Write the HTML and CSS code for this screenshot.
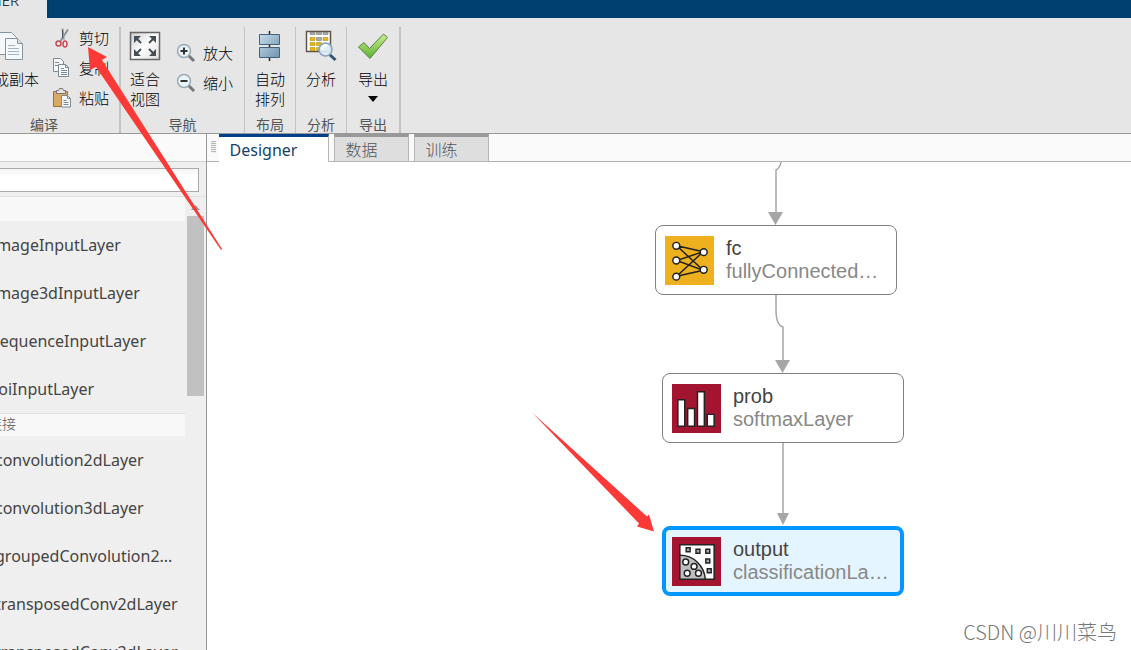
FILE: index.html
```html
<!DOCTYPE html>
<html lang="zh-CN">
<head>
<meta charset="utf-8">
<meta name="viewport" content="width=device-width, initial-scale=1">
<title>Designer</title>
<link rel="stylesheet" href="styles.css">
</head>
<body>
<div class="app">
  <header class="titlebar"><span class="app-tab">DESIGNER</span></header>

  <div class="toolstrip">
    <section class="group group-edit">
      <div class="tools">
        <button class="tool tool-big tool-copy" type="button">
          <svg width="32" height="32" viewBox="0 0 32 32"><g fill="#f4f8fa" stroke="#8795a0"><path d="M5.500 2.500h12l5 5v17h-17z"/><path d="M11.500 8.500h12l5 5v16h-17z"/><path d="M23.500 8.500v5h5" fill="#d5dfe5"/><path d="M14 15.500h7M14 18.500h11M14 21.500h11M14 24.500h11" stroke="#a5b4be"/></g></svg>
          <span>生成副本</span>
        </button>
        <div class="stack">
          <button class="tool" type="button">
            <svg width="20" height="20" viewBox="0 0 20 20" fill="none"><path d="M10.500 0.500l1.200 11M16 1.500L8.500 13" stroke="#8b959b" stroke-width="2"/><path d="M10.500 2v8" stroke="#4e5a62"/><ellipse cx="6.500" cy="15.500" rx="2.500" ry="2.500" stroke="#c94a54" stroke-width="1.500"/><ellipse cx="13" cy="16" rx="2" ry="3" stroke="#c94a54" stroke-width="1.500"/></svg>
            <span>剪切</span>
          </button>
          <button class="tool" type="button">
            <svg width="20" height="20" viewBox="0 0 20 20"><g fill="#f5f7f8" stroke="#7d8a93"><path d="M1.500 0.500h7l3 3v10h-10z"/><path d="M6.500 6.500h7l3 3v9h-10z"/><path d="M13.500 6.500v3h3M9 10.500h3M9 12.500h6M9 14.500h6M9 16.500h6M3 4.500h4M3 7.500h3" fill="none"/></g></svg>
            <span>复制</span>
          </button>
          <button class="tool" type="button">
            <svg width="20" height="20" viewBox="0 0 20 20"><path d="M1.500 3.500h14v15h-14z" fill="#d9aa62" stroke="#9c7132"/><path d="M4.500 5.500v-3h2l1-2h3l1 2h2v3z" fill="#e1e3e4" stroke="#777"/><path d="M9.500 7.500h6l3 3v8.500h-9z" fill="#f5f7f8" stroke="#7d8a93"/><path d="M15.500 7.500v3h3M11.500 12.500h3M11.500 14.500h5M11.500 16.500h5" fill="none" stroke="#7d8a93"/></svg>
            <span>粘贴</span>
          </button>
        </div>
      </div>
      <h2 class="group-name">编译</h2>
    </section>

    <section class="group group-nav">
      <div class="tools">
        <button class="tool tool-big" type="button">
          <svg width="32" height="32" viewBox="0 0 32 32"><defs><linearGradient id="fit" x2="1" y2="1"><stop stop-color="#ccc"/><stop offset=".5" stop-color="#fff"/><stop offset="1" stop-color="#ddd"/></linearGradient></defs><path d="M1.500 2.500h29v27h-29z" fill="url(#fit)" stroke="#666" stroke-width="1.500"/><g fill="#454f55" stroke="#454f55"><path d="M5 6h7l-7 7zM27 6h-7l7 7zM5 26h7l-7-7zM27 26h-7l7-7z" stroke="none"/><path d="M7 8l5 5M25 8l-5 5M7 24l5-5M25 24l-5-5" stroke-width="2"/></g></svg>
          <span>适合<br>视图</span>
        </button>
        <div class="stack stack-zoom">
          <button class="tool" type="button">
            <svg width="20" height="20" viewBox="0 0 20 20"><path d="M12 12l6 6" stroke="#777" stroke-width="3"/><circle cx="8" cy="8" r="6.500" fill="#e9f3fa" stroke="#9eabb4" stroke-width="1.500"/><path d="M4.500 8h7M8 4.500v7" stroke="#333" stroke-width="2"/></svg>
            <span>放大</span>
          </button>
          <button class="tool" type="button">
            <svg width="20" height="20" viewBox="0 0 20 20"><path d="M12 12l6 6" stroke="#777" stroke-width="3"/><circle cx="8" cy="8" r="6.500" fill="#e9f3fa" stroke="#9eabb4" stroke-width="1.500"/><path d="M4.500 8h7" stroke="#333" stroke-width="2"/></svg>
            <span>缩小</span>
          </button>
        </div>
      </div>
      <h2 class="group-name">导航</h2>
    </section>

    <section class="group group-single">
      <div class="tools">
        <button class="tool tool-big" type="button">
          <svg width="32" height="32" viewBox="0 0 32 32"><defs><linearGradient id="bar" x2="1" y2="1"><stop stop-color="#c5dbea"/><stop offset="1" stop-color="#6e93ae"/></linearGradient></defs><path d="M15.500 1v30" stroke="#222" stroke-width="1.500"/><path d="M5.500 4.500h20v10h-20zM5.500 17.500h20v10h-20z" fill="url(#bar)" stroke="#46627a"/></svg>
          <span>自动<br>排列</span>
        </button>
      </div>
      <h2 class="group-name">布局</h2>
    </section>

    <section class="group group-single">
      <div class="tools">
        <button class="tool tool-big" type="button">
          <svg width="32" height="32" viewBox="0 0 32 32"><path d="M1.500 1.500h24v20h-24z" fill="#fff" stroke="#5f5348" stroke-width="1.500"/><path d="M5 2.500h5v2H5zM11.500 2.500h5v2h-5zM18 2.500h5v2h-5zM11.500 7.500h5v3h-5z" fill="#aaa" stroke="#666" stroke-width=".5"/><path d="M5 7.500h5v3H5zM18 7.500h5v3h-5zM5 12.500h5v3H5zM11.500 12.500h5v3h-5zM5 17.500h5v3H5zM11.500 17.500h4v3h-4z" fill="#e8b70d" stroke="#a9850a" stroke-width=".5"/><path d="M24 24l6.500 6" stroke="#31547a" stroke-width="3"/><circle cx="20.500" cy="19.500" r="6.500" fill="#dbeef8" fill-opacity=".9" stroke="#8aa5b8" stroke-width="1.500"/><path d="M17 20a4 4 0 0 1 5-4" fill="none" stroke="#fff" stroke-width="2"/></svg>
          <span>分析</span>
        </button>
      </div>
      <h2 class="group-name">分析</h2>
    </section>

    <section class="group group-export">
      <div class="tools">
        <button class="tool tool-big tool-export" type="button">
          <svg width="32" height="32" viewBox="0 0 32 32"><defs><linearGradient id="ok" x2="0" y2="1"><stop stop-color="#c8f08c"/><stop offset="1" stop-color="#5cb030"/></linearGradient></defs><path d="M1.500 17l5.500-4.500 5.500 6L26.500 4l4 3.500L13 28.500z" fill="url(#ok)" stroke="#5c7d4a" stroke-linejoin="round"/></svg>
          <span>导出</span>
          <svg width="10" height="6" viewBox="0 0 10 6"><path d="M0 0h10L5 6z"/></svg>
        </button>
      </div>
      <h2 class="group-name">导出</h2>
    </section>
  </div>

  <div class="workspace">
    <aside class="library">
      <div class="library-head"></div>
      <div class="search"><input type="text" aria-label="搜索层"></div>
      <div class="library-body">
        <div class="layers">
          <h3 class="section-name"></h3>
          <ul class="layer-list">
            <li>imageInputLayer</li>
            <li>image3dInputLayer</li>
            <li>sequenceInputLayer</li>
            <li>roiInputLayer</li>
          </ul>
          <h3 class="section-name section-line">连接</h3>
          <ul class="layer-list layer-list-conv">
            <li>convolution2dLayer</li>
            <li>convolution3dLayer</li>
            <li>groupedConvolution2...</li>
            <li>transposedConv2dLayer</li>
            <li>transposedConv3dLayer</li>
          </ul>
        </div>
        <div class="scrollbar">
          <svg width="9" height="5" viewBox="0 0 9 5"><path d="M0 5h9L4.500 0z" fill="#999"/></svg>
          <div class="thumb"></div>
        </div>
      </div>
    </aside>

    <main class="document">
      <nav class="tabs">
        <span class="grip"></span>
        <button class="tab tab-active" type="button">Designer</button>
        <button class="tab" type="button">数据</button>
        <button class="tab" type="button">训练</button>
      </nav>
      <div class="canvas">
        <svg class="links" width="720" height="480" viewBox="0 0 720 480">
          <g fill="none" stroke="#a6a6a6" stroke-width="1.500">
            <path d="M574 0Q573 6 569 8V52M569 133V148Q569 163 576 165V200M576 280V352"/>
          </g>
          <path d="M561 50h15l-7.500 13zM568 198h15l-7.500 13zM570 351h12l-6 12z" fill="#a6a6a6"/>
        </svg>
        <div class="node node-fc">
          <svg class="node-icon" width="49" height="49" viewBox="0 0 50 50"><path d="M0 0h50v50H0z" fill="#edb120"/><path d="M12 10l27 6L12 25l27 10L12 41l27-25M12 10l27 25L12 41" fill="none" stroke="#222" stroke-width="1.500"/><g fill="#fff" stroke="#222" stroke-width="1.500"><circle cx="11.500" cy="10" r="3.500"/><circle cx="11.500" cy="25" r="3.500"/><circle cx="11.500" cy="41.500" r="3.500"/><circle cx="39.500" cy="16.500" r="3.500"/><circle cx="39.500" cy="34.500" r="3.500"/></g></svg>
          <div class="node-text"><strong>fc</strong><span>fullyConnected…</span></div>
        </div>
        <div class="node node-prob">
          <svg class="node-icon" width="49" height="49" viewBox="0 0 50 50"><path d="M0 0h50v50H0z" fill="#a2142f"/><path d="M6 16h7v27H6zM16 25h7v18h-7zM26 8h7v35h-7zM36 31h7v12h-7z" fill="#fff" stroke="#222" stroke-width="1.500"/></svg>
          <div class="node-text"><strong>prob</strong><span>softmaxLayer</span></div>
        </div>
        <div class="node node-output">
          <svg class="node-icon" width="49" height="49" viewBox="0 0 50 50"><path d="M0 0h50v50H0z" fill="#a2142f"/><g stroke="#222" stroke-width="1.500"><path d="M8 8h35v35H8z" fill="#fff"/><path d="M8 18.500c14 0 25 11 26 24.500H8z" fill="#bfbfbf"/><path d="M14.500 11h4v4h-4zM24.500 12.500h4v4h-4zM34.500 12.500h4v4h-4zM34.500 22.500h4v4h-4zM36 32.500h4v4h-4z" fill="#aaa"/><g fill="#fff"><circle cx="14" cy="25.500" r="3"/><circle cx="22.500" cy="30" r="3"/><circle cx="15.500" cy="37" r="3"/><circle cx="27" cy="37" r="3"/></g></g></svg>
          <div class="node-text"><strong>output</strong><span>classificationLa…</span></div>
        </div>
        <p class="watermark">CSDN @川川菜鸟</p>
      </div>
    </main>
  </div>

  <svg class="annotations" width="700" height="560" viewBox="0 0 700 560" fill="#fb3a38">
    <path d="M88 47l19 10-5 3 120 189-1 1L96 67l-6 3z"/>
    <path d="M532 412.500l115 104 2-2 5 17-17-5 2-3z"/>
  </svg>
</div>
</body>
</html>
```

FILE: styles.css
```css
* {
  box-sizing: border-box;
}

body {
  margin: 0;
  font-family: "Noto Sans", "Noto Sans CJK SC", sans-serif;
  font-size: 16px;
  color: #444;
  background: #fff;
}

h2,
h3,
p,
ul {
  margin: 0;
  padding: 0;
  font-weight: 400;
}

svg {
  display: block;
  flex: none;
}

button {
  border: 0;
  padding: 0;
  background: none;
  font: inherit;
  color: inherit;
}

.app {
  position: relative;
  display: flex;
  flex-direction: column;
  height: 100vh;
  overflow: hidden;
}

.titlebar {
  display: flex;
  flex: none;
  height: 18px;
  background: #004071;
}

.app-tab {
  display: flex;
  justify-content: flex-end;
  width: 47px;
  padding-right: 28px;
  overflow: hidden;
  font-size: 15px;
  font-weight: 300;
  line-height: 0;
  color: #000;
  background: #e6e6e6;
}

/* Toolstrip */

.toolstrip {
  display: flex;
  flex: none;
  height: 116px;
  padding-top: 9px;
  background: #e6e6e6;
  border-bottom: 1px solid #999;
  font-family: "Noto Sans CJK SC", sans-serif;
  font-size: 15px;
  font-weight: 300;
  color: #000;
}

.group {
  display: flex;
  flex-direction: column;
  justify-content: space-between;
  border-right: 1px solid #c4c4c4;
}

.group-edit {
  width: 121px;
  border-right-width: 2px;
}

.group-nav {
  width: 124px;
}

.group-single {
  width: 51px;
}

.group-export {
  width: 54px;
  border-right-width: 2px;
}

.tools {
  display: flex;
}

.tool {
  display: flex;
  align-items: center;
  gap: 7px;
  height: 30px;
  line-height: 20px;
  white-space: nowrap;
}

.tool-big {
  flex-direction: column;
  width: 50px;
  height: auto;
  padding-top: 3px;
}

.group-nav .tool-big {
  width: 48px;
}

.tool-export {
  width: 52px;
}

.tool-copy {
  align-items: flex-end;
  width: 39px;
}

.tool-copy svg {
  margin-right: 13px;
}

.stack {
  display: flex;
  flex-direction: column;
}

.group-edit .stack {
  padding-left: 13px;
  margin-top: -4px;
}

.stack-zoom {
  padding: 11px 0 0 7px;
}

.group-name {
  height: 18px;
  font-size: 14px;
  line-height: 18px;
  text-align: center;
  color: #555;
}

.group-edit .group-name {
  padding-right: 31px;
}

/* Layer library */

.workspace {
  display: flex;
  flex: 1;
  min-height: 0;
}

.library {
  display: flex;
  flex: none;
  flex-direction: column;
  width: 207px;
  background: #efefef;
  border-right: 1px solid #999;
}

.library-head {
  flex: none;
  height: 28px;
  background: #fafafa;
  border-bottom: 1px solid #d0d0d0;
}

.search {
  flex: none;
  height: 35px;
  padding: 6px 7px 4px 0;
  border-bottom: 1px solid #e0e0e0;
}

.search input {
  display: block;
  width: 100%;
  height: 24px;
  border: 1px solid #aaa;
  border-left: 0;
  background: linear-gradient(#f5f5f5, #fff 8px);
}

.library-body {
  display: flex;
  flex: 1;
  min-height: 0;
}

.layers {
  flex: 1;
  overflow: hidden;
}

.section-name {
  height: 24px;
  margin-left: -12px;
  font-size: 14px;
  font-weight: 300;
  line-height: 23px;
  color: #555;
  background: #f8f8f8;
}

.section-line {
  height: 23px;
  line-height: 20px;
  border-top: 1px solid #e2e2e2;
}

.layer-list {
  list-style: none;
  margin-left: -8px;
}

.layer-list-conv {
  margin-left: -4px;
}

.layer-list li {
  height: 48px;
  line-height: 48px;
  white-space: nowrap;
}

.layer-list-conv {
  margin-left: -5px;
}

.scrollbar {
  display: flex;
  flex-direction: column;
  align-items: center;
  width: 21px;
  padding: 8px 2px 0;
  gap: 6px;
}

.thumb {
  width: 17px;
  height: 180px;
  background: #c1c1c1;
}

/* Document area */

.document {
  display: flex;
  flex: 1;
  flex-direction: column;
  min-width: 0;
}

.tabs {
  display: flex;
  flex: none;
  height: 28px;
  background: #fafafa;
  box-shadow: inset 0 -1px #b5b5b5;
}

.grip {
  width: 5px;
  height: 12px;
  margin: 7px 3px 0 4px;
  background: repeating-linear-gradient(#bbb 0 1px, #eee 1px 2px);
}

.tab {
  height: 28px;
  width: 75px;
  margin-left: 5px;
  padding: 2px 20px 0 0;
  border: 1px solid #b5b5b5;
  border-top: 3px solid #999;
  background: #dedede;
  line-height: 23px;
  font-weight: 300;
  color: #555;
}

.tab-active {
  width: 110px;
  margin-left: 0;
  border-top: 3px solid #003f8a;
  border-bottom: 0;
  border-left: 0;
  background: #fff;
  font-weight: 400;
  color: #163f6b;
}

.canvas {
  position: relative;
  flex: 1;
  min-height: 0;
  overflow: hidden;
}

.links {
  position: absolute;
  left: 0;
  top: 0;
}

.node {
  position: absolute;
  display: flex;
  align-items: center;
  gap: 12px;
  width: 242px;
  height: 70px;
  padding-left: 9px;
  border: 1px solid #808080;
  border-radius: 8px;
  background: #fff;
  font-family: "Liberation Sans", Arial, sans-serif;
  font-size: 20px;
  line-height: 23px;
}

.node-fc {
  left: 448px;
  top: 63px;
}

.node-prob {
  left: 455px;
  top: 211px;
}

.node-output {
  left: 455px;
  top: 364px;
  padding-left: 6px;
  border: 4px solid #0098ff;
  background: #e5f5ff;
}

.node-text {
  display: flex;
  flex-direction: column;
}

.node-text strong {
  font-weight: 400;
  color: #444;
}

.node-text span {
  color: #888;
}

.watermark {
  position: absolute;
  right: 14px;
  bottom: 6px;
  font-family: "Noto Sans CJK SC", sans-serif;
  font-size: 20px;
  font-weight: 300;
  line-height: 24px;
  color: #777;
}

.annotations {
  position: absolute;
  left: 0;
  top: 0;
  pointer-events: none;
}
```
